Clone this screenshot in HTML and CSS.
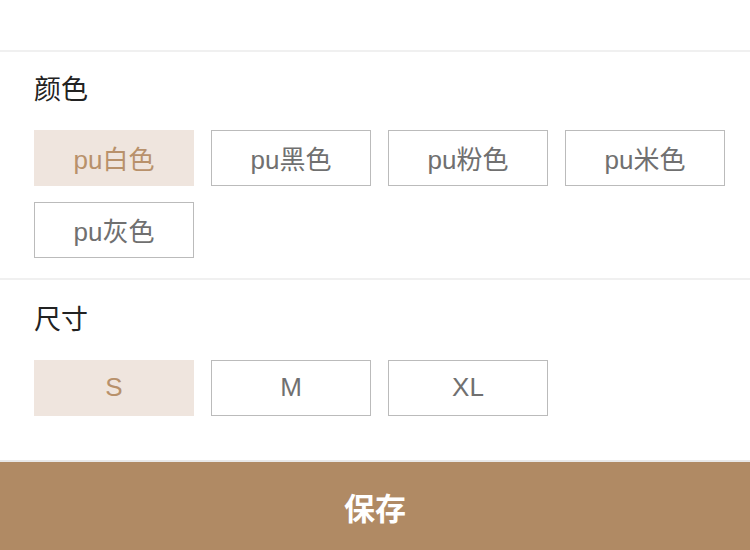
FILE: index.html
```html
<!DOCTYPE html>
<html lang="zh">
<head>
<meta charset="utf-8">
<link rel="stylesheet" href="styles.css">
</head>
<body>
<div class="page">
  <div class="top"></div>
  <section class="group">
    <h2 class="title">颜色</h2>
    <div class="options">
      <div class="opt active">pu白色</div>
      <div class="opt">pu黑色</div>
      <div class="opt">pu粉色</div>
      <div class="opt">pu米色</div>
      <div class="opt">pu灰色</div>
    </div>
  </section>
  <section class="group">
    <h2 class="title">尺寸</h2>
    <div class="options">
      <div class="opt active">S</div>
      <div class="opt">M</div>
      <div class="opt">XL</div>
    </div>
  </section>
  <div class="spacer"></div>
  <button class="save">保存</button>
</div>
</body>
</html>
```
FILE: styles.css
```css
* { box-sizing: border-box; }
html, body { margin: 0; padding: 0; background: #fff; }
body { font-family: "Liberation Sans", "Noto Sans CJK SC", sans-serif; }
.page { width: 750px; height: 550px; display: flex; flex-direction: column; overflow: hidden; }
.top { height: 50px; flex: none; }
.group { border-top: 2px solid #f0f0f0; padding: 24px 16px 20px 34px; }
.group + .group { padding-top: 26px; }
.title { margin: 0 0 26px; font-size: 27px; line-height: 28px; font-weight: normal; color: #222; }
.options { display: flex; flex-wrap: wrap; column-gap: 17px; row-gap: 16px; }
.opt { width: 160px; height: 56px; border: 1px solid #bbb; display: flex; align-items: center; justify-content: center; font-size: 26px; color: #707070; padding-bottom: 2px; }
.opt.active { border-color: #efe5de; background: #efe5de; color: #b8916b; }
.spacer { flex: 1; }
.save { flex: none; height: 90px; border: none; border-top: 2px solid #e8e8e8; background: #b08a64; color: #fff; font-family: "Noto Sans CJK SC", sans-serif; font-size: 31px; font-weight: bold; padding: 0; }
```
